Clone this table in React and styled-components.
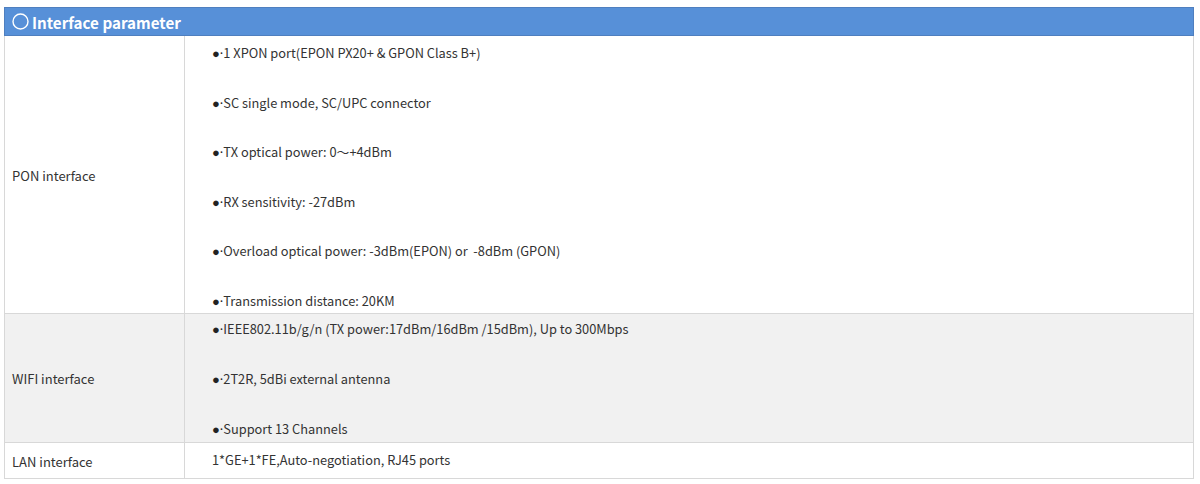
import React from 'react';
import styled, { createGlobalStyle } from 'styled-components';

const GlobalStyle = createGlobalStyle`
    *, *::before, *::after {
        box-sizing: border-box;
    }
    body {
        margin: 0;
        background: #ffffff;
        font-family: "Noto Sans CJK SC", "Noto Sans", sans-serif;
        color: #333333;
    }
`;

const Page = styled.div`
    padding: 7px 7px 0 4px;
`;

const Table = styled.div`
    width: 1190px;
    border-bottom: 1px solid #d8d8d8;
`;

const Header = styled.div`
    display: flex;
    align-items: center;
    gap: 3px;
    height: 29px;
    padding-left: 7px;
    background: #5790d8;
    border: 1px solid #4f7fbf;
    color: #ffffff;
    font-size: 15.2px;
    font-weight: 700;
`;

const Row = styled.div`
    display: grid;
    grid-template-columns: 180px 1fr;
    background: ${(p) => (p.$shaded ? '#f1f1f1' : '#ffffff')};
    border-left: 1px solid #d8d8d8;
    border-right: 1px solid #d8d8d8;
    border-top: ${(p) => (p.$first ? 'none' : '1px solid #d8d8d8')};
    min-height: ${(p) => p.$minHeight || 0}px;
`;

const Label = styled.div`
    display: flex;
    align-items: center;
    padding: 2px 7px 0;
    font-size: 13px;
    border-right: 1px solid #d8d8d8;
`;

const Values = styled.div`
    display: flex;
    flex-direction: column;
    justify-content: center;
    gap: ${(p) => p.$gap || 0}px;
    padding: ${(p) => p.$pad || '6px 0 3px'};
    padding-left: 27px;
    font-size: 12.8px;
    line-height: 20px;
`;

const Item = styled.div`
    white-space: pre;
`;

const Dot = styled.span`
    font-family: "Noto Sans", sans-serif;
    font-size: 13px;
    color: #222222;
`;

const Circle = () => (
    <svg width="17" height="17" viewBox="0 0 17 17">
        <circle cx="8.5" cy="8.5" r="7.5" fill="none" stroke="#ffffff" strokeWidth="1.4" />
    </svg>
);

const rows = [
    {
        label: 'PON interface',
        gap: 29.6,
        pad: '7px 0 2px',
        items: [
            '1 XPON port(EPON PX20+ & GPON Class B+)',
            'SC single mode, SC/UPC connector',
            'TX optical power: 0～+4dBm',
            'RX sensitivity: -27dBm',
            'Overload optical power: -3dBm(EPON) or  -8dBm (GPON)',
            'Transmission distance: 20KM',
        ],
    },
    {
        label: 'WIFI interface',
        shaded: true,
        gap: 30,
        pad: '5px 0 3px',
        items: [
            'IEEE802.11b/g/n (TX power:17dBm/16dBm /15dBm), Up to 300Mbps',
            '2T2R, 5dBi external antenna',
            'Support 13 Channels',
        ],
    },
];

export default function App() {
    return (
        <>
            <GlobalStyle />
            <Page>
                <Table>
                    <Header>
                        <Circle />
                        Interface parameter
                    </Header>
                    {rows.map((r, i) => (
                        <Row key={r.label} $shaded={r.shaded} $first={i === 0}>
                            <Label>{r.label}</Label>
                            <Values $gap={r.gap} $pad={r.pad}>
                                {r.items.map((t) => (
                                    <Item key={t}>
                                        <Dot>{'\u25CF\u00B7'}</Dot>
                                        {t}
                                    </Item>
                                ))}
                            </Values>
                        </Row>
                    ))}
                    <Row $minHeight={36}>
                        <Label>LAN interface</Label>
                        <Values $pad="0">
                            <Item>1*GE+1*FE,Auto-negotiation, RJ45 ports</Item>
                        </Values>
                    </Row>
                </Table>
            </Page>
        </>
    );
}
